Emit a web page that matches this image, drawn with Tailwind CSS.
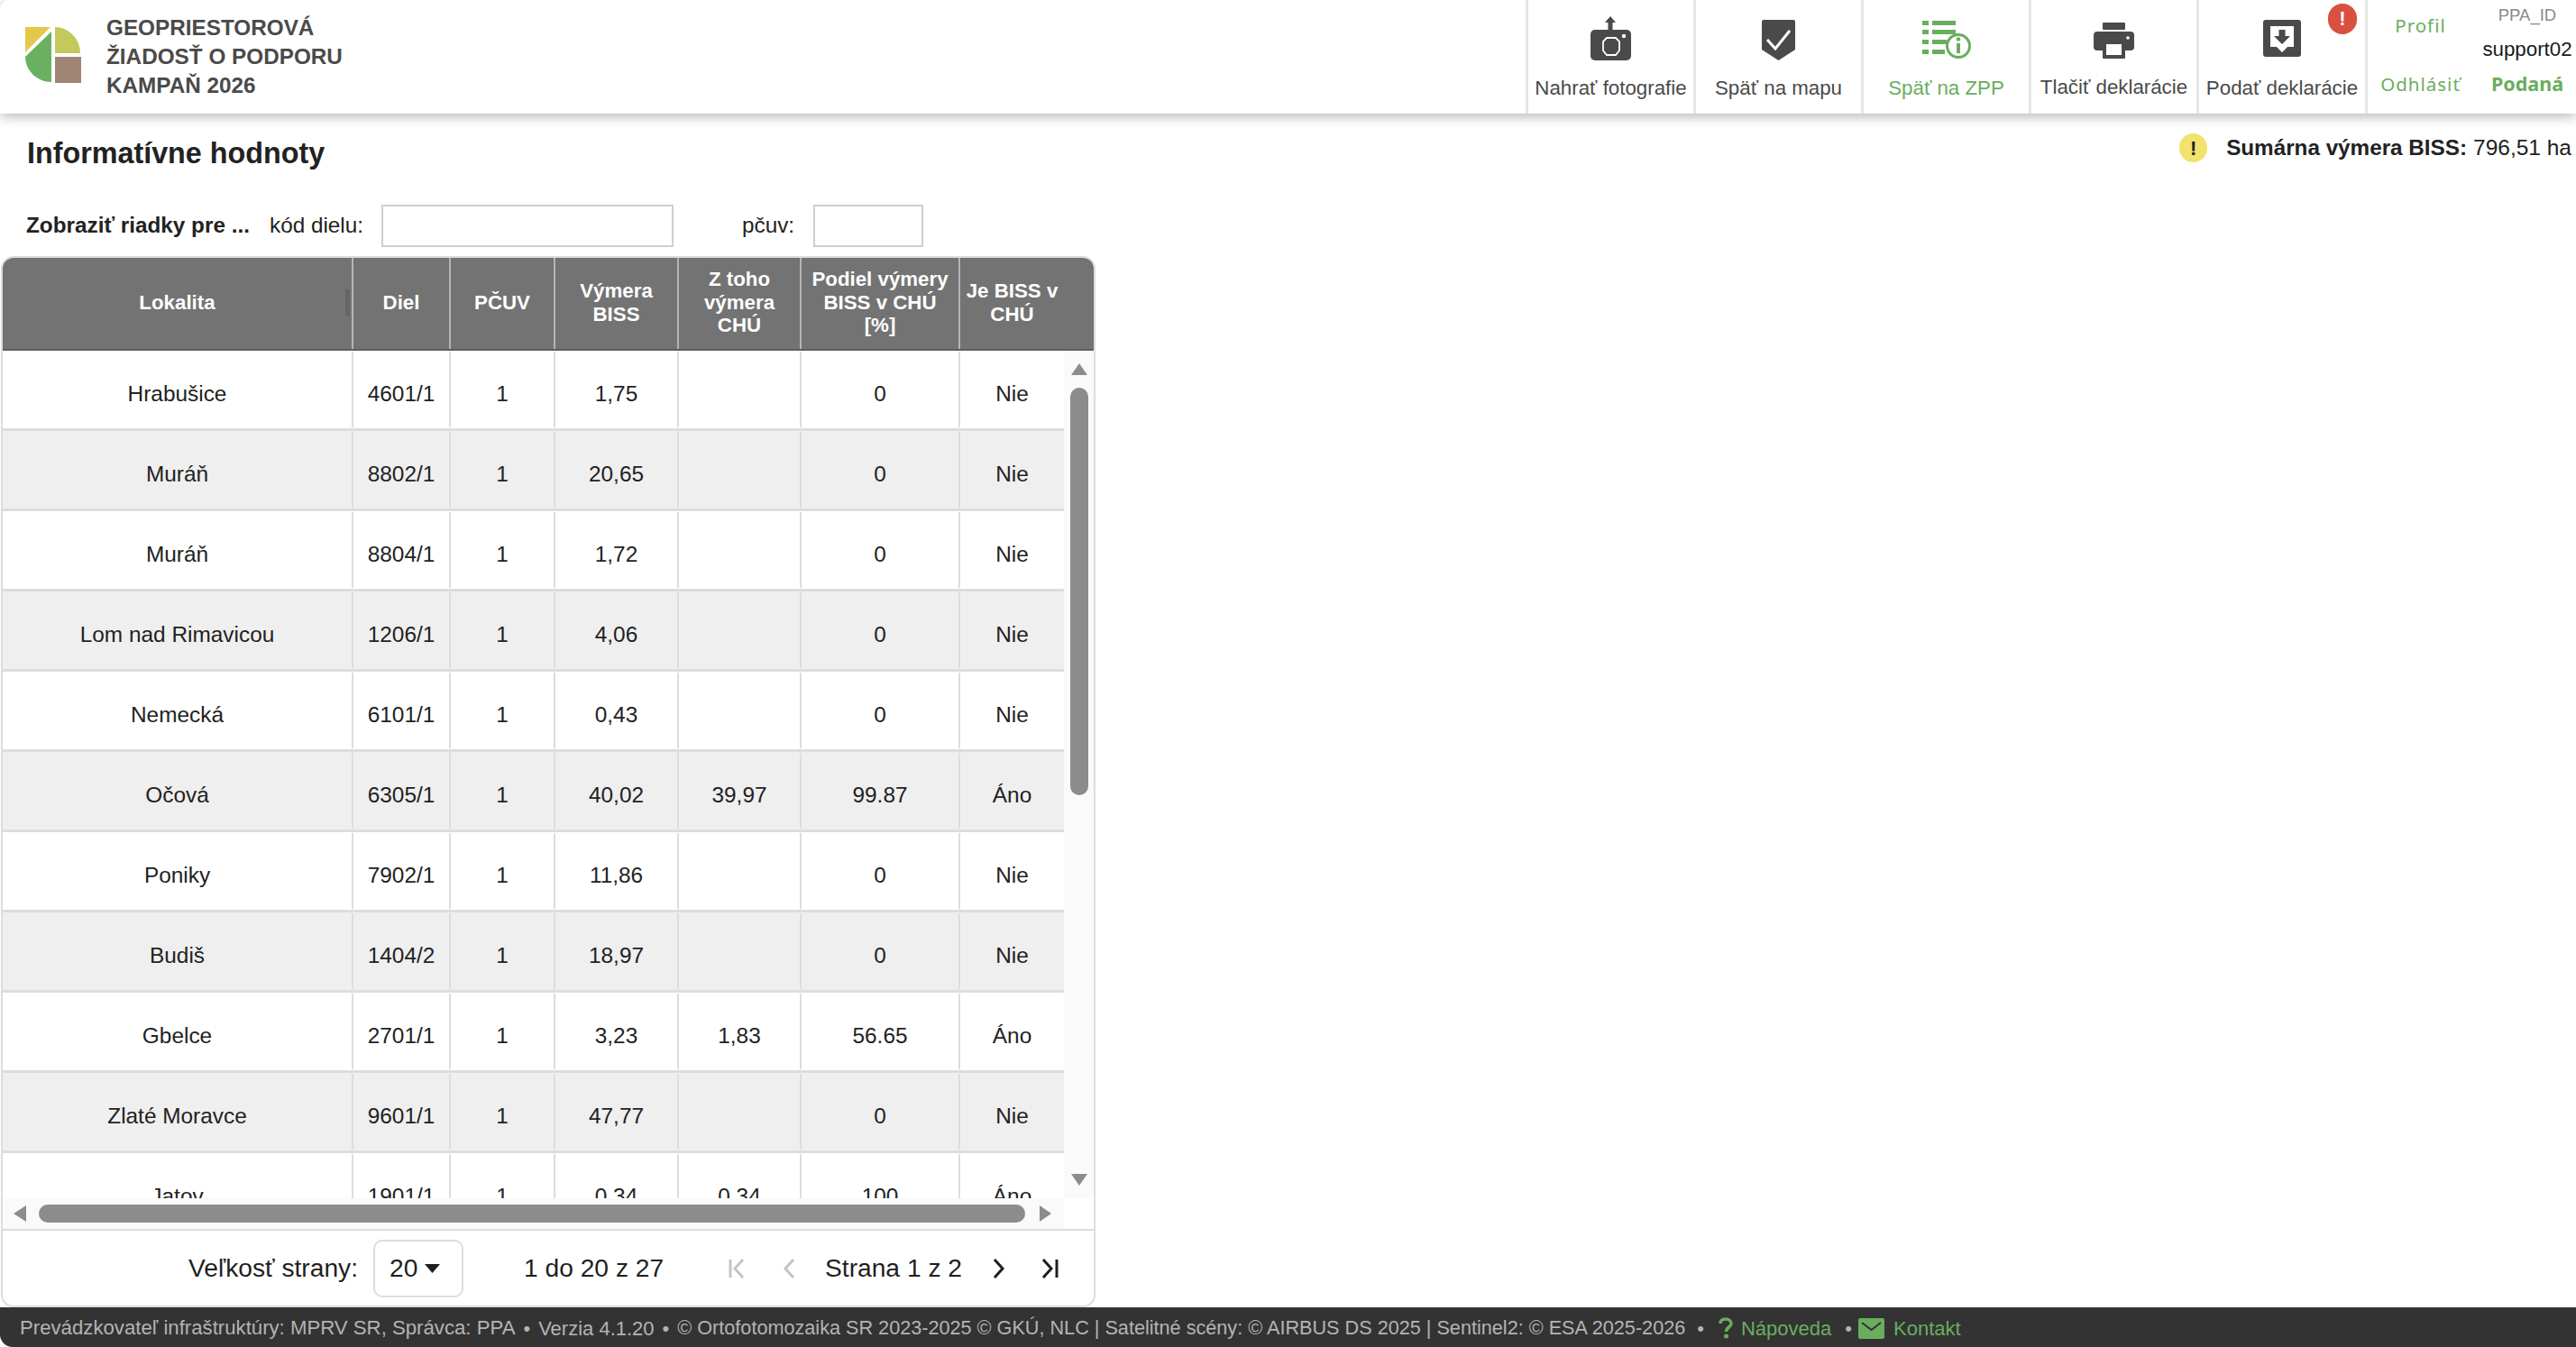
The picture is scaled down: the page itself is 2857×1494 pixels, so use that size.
<!DOCTYPE html>
<html lang="sk">
<head>
  <meta charset="UTF-8">
  <meta name="viewport" content="width=device-width, initial-scale=1.0">
  <title>Informatívne hodnoty</title>
  <script src="https://cdn.jsdelivr.net/npm/@tailwindcss/browser@4"></script>
</head>
<body class="bg-white font-['Liberation_Sans',Arial,sans-serif] text-[#222] overflow-hidden">
<div class="flex h-[1494px] w-[2857px] flex-col overflow-hidden">

  <!-- top bar -->
  <header class="relative z-10 flex h-[126px] shrink-0 justify-between rounded-tl-[10px] bg-white shadow-[0_3px_14px_rgba(0,0,0,0.3)]">
    <div class="flex items-center">
      <svg class="ml-[28px] mt-[-4px]" width="62" height="62" viewBox="0 0 62 62">
        <polygon points="0,0 28,0 0,28" fill="#e3c94a"/>
        <path d="M29 5V61C13 61 0 48 0 33Z" fill="#6ab060"/>
        <path d="M33 0C48 0 61 13 61 29H33Z" fill="#c3c95a"/>
        <rect x="33" y="33" width="29" height="29" fill="#a08474"/>
      </svg>
      <div class="ml-[28px] mt-[-1px] text-[24.3px] font-bold leading-[32px] text-[#4a4a4a]">
        <div>GEOPRIESTOROVÁ</div>
        <div>ŽIADOSŤ O PODPORU</div>
        <div>KAMPAŇ 2026</div>
      </div>
    </div>

    <div class="flex">
      <div class="flex w-[186px] flex-col items-center border-l-[3px] border-[#e6e6e6] text-[22.3px] text-[#4a4a4a]">
        <svg class="mt-[18px]" width="45" height="49" viewBox="0 0 45 49">
          <rect x="0" y="15" width="45" height="34" rx="5" fill="#4a4a4a"/>
          <path d="M22 0L28 7H24.5V15H19.5V7H16Z" fill="#4a4a4a"/>
          <polygon points="18,24 28,24 32,28 32,38 28,43 18,43 14,38 14,28" fill="none" stroke="#fff" stroke-width="1.8"/>
          <circle cx="37" cy="22" r="2.2" fill="#fff"/>
        </svg>
        <span class="mt-[18px] leading-[26px]">Nahrať fotografie</span>
      </div>
      <div class="flex w-[186px] flex-col items-center border-l-[3px] border-[#e6e6e6] text-[22.3px] text-[#4a4a4a]">
        <svg class="mt-[22px]" width="37" height="45" viewBox="0 0 37 45">
          <path d="M2 0H35A2 2 0 0 1 37 2V33L18.5 45L0 33V2A2 2 0 0 1 2 0Z" fill="#4a4a4a"/>
          <path d="M6 22L15 32L31 12" fill="none" stroke="#fff" stroke-width="3"/>
        </svg>
        <span class="mt-[18px] leading-[26px]">Späť na mapu</span>
      </div>
      <div class="flex w-[186px] flex-col items-center border-l-[3px] border-[#e6e6e6] text-[22.3px] text-[#6aad5e]">
        <svg class="mt-[22px]" width="54" height="45" viewBox="0 0 54 45">
          <g fill="#6aad5e">
            <rect x="0" y="1" width="7" height="5"/><rect x="11" y="1" width="26" height="5"/>
            <rect x="0" y="11" width="7" height="5"/><rect x="11" y="11" width="26" height="5"/>
            <rect x="0" y="22" width="7" height="5"/><rect x="11" y="22" width="16" height="5"/>
            <rect x="0" y="33" width="7" height="5"/><rect x="11" y="33" width="14" height="5"/>
          </g>
          <circle cx="40" cy="29" r="12.5" fill="#fff" stroke="#6aad5e" stroke-width="3"/>
          <rect x="38" y="26" width="4" height="11" fill="#6aad5e"/>
          <circle cx="40" cy="21.5" r="2.3" fill="#6aad5e"/>
        </svg>
        <span class="mt-[18px] leading-[26px]">Späť na ZPP</span>
      </div>
      <div class="flex w-[186px] flex-col items-center border-l-[3px] border-[#e6e6e6] text-[22.3px] text-[#4a4a4a]">
        <svg class="mt-[25px]" width="45" height="40" viewBox="0 0 45 40">
          <rect x="10" y="0" width="25" height="8" rx="1" fill="#4a4a4a"/>
          <rect x="0" y="10" width="45" height="21" rx="4" fill="#4a4a4a"/>
          <rect x="10" y="20" width="25" height="20" rx="1" fill="#4a4a4a"/>
          <rect x="14" y="24" width="17" height="12" fill="#fff"/>
          <circle cx="38" cy="17" r="1.8" fill="#fff"/>
        </svg>
        <span class="mt-[19px] leading-[26px]">Tlačiť deklarácie</span>
      </div>
      <div class="relative flex w-[187px] flex-col items-center border-l-[3px] border-[#e6e6e6] text-[22.3px] text-[#4a4a4a]">
        <svg class="mt-[22px]" width="42" height="41" viewBox="0 0 42 41">
          <rect x="0" y="0" width="42" height="41" rx="3" fill="#4a4a4a"/>
          <path d="M8 7H34V30H27L21 36L15 30H8Z" fill="#fff"/>
          <path d="M17.5 11H24.5V18H30L21 27L12 18H17.5Z" fill="#4a4a4a"/>
        </svg>
        <span class="mt-[22px] leading-[26px]">Podať deklarácie</span>
        <span class="absolute left-[143px] top-[4px] flex h-[34px] w-[32px] items-center justify-center rounded-full bg-[#d9503f] text-[22px] font-bold leading-none text-white">!</span>
      </div>
      <div class="flex w-[234px] border-l-[3px] border-[#e6e6e6]">
        <div class="flex w-[117px] shrink-0 flex-col items-center justify-between pb-[18px] pt-[13px] font-['Noto_Sans',sans-serif] text-[20.5px] leading-[30px] tracking-[1px] text-[#6aad5e]">
          <span>Profil</span>
          <span>Odhlásiť</span>
        </div>
        <div class="ml-[3px] flex w-[114px] shrink-0 flex-col items-center pt-[5px]">
          <span class="h-[24px] text-[18.5px] leading-[24px] text-[#8a8a8a]">PPA_ID</span>
          <span class="mt-[11px] h-[30px] text-[22.3px] leading-[30px] text-[#1a1a1a]">support02</span>
          <span class="mt-[8px] h-[30px] font-['Noto_Sans',sans-serif] text-[21.5px] font-bold leading-[30px] text-[#6aad5e]">Podaná</span>
        </div>
      </div>
    </div>
  </header>

  <main class="flex min-h-0 flex-1 flex-col">
    <div class="flex h-[90px] shrink-0 justify-between pl-[30px] pr-[5px]">
      <h1 class="mt-[24px] text-[32.3px] font-bold leading-[40px] text-[#222]">Informatívne hodnoty</h1>
      <div class="mt-[22px] flex h-[32px] items-center text-[24.5px]">
        <span class="mr-[21px] flex h-[32px] w-[31px] items-center justify-center rounded-full bg-[#f2e26e] text-[22px] font-bold text-[#222]">!</span>
        <span class="text-[24.25px] font-bold">Sumárna výmera BISS:</span><span class="ml-[7px]">796,51 ha</span>
      </div>
    </div>

    <div class="flex h-[68px] shrink-0 items-center pl-[29px] text-[24.3px]">
      <span class="w-[270px] font-bold">Zobraziť riadky pre ...</span>
      <span class="w-[124px]">kód dielu:</span>
      <div class="h-[47px] w-[324px] border-[2px] border-[#cfcfcf] bg-white"></div>
      <span class="ml-[76px] w-[79px]">pčuv:</span>
      <div class="h-[47px] w-[122px] border-[2px] border-[#cfcfcf] bg-white"></div>
    </div>

    <!-- table card -->
    <div class="ml-[1px] flex h-[1166px] w-[1214px] shrink-0 flex-col overflow-hidden rounded-[14px] border-[2px] border-[#ddd]">
      <div class="relative flex h-[103px] shrink-0 border-b-[2px] border-[#5f5f5f] bg-[#737373] text-center text-[22.3px] font-bold leading-[25.5px] text-white">
        <div class="flex w-[387px] items-center justify-center pb-[2px]">Lokalita</div>
        <div class="flex w-[108px] items-center justify-center border-l-2 border-[#b5b5b5] pb-[2px]">Diel</div>
        <div class="flex w-[116px] items-center justify-center border-l-2 border-[#b5b5b5] pb-[2px]">PČUV</div>
        <div class="flex w-[137px] items-center justify-center border-l-2 border-[#b5b5b5] pb-[2px]">Výmera<br>BISS</div>
        <div class="flex w-[136px] items-center justify-center border-l-2 border-[#b5b5b5] pb-[2px]">Z toho<br>výmera<br>CHÚ</div>
        <div class="flex w-[176px] items-center justify-center border-l-2 border-[#b5b5b5] pb-[2px]">Podiel výmery<br>BISS v CHÚ<br>[%]</div>
        <div class="flex w-[117px] items-center justify-center border-l-2 border-[#b5b5b5] pb-[2px]">Je BISS v<br>CHÚ</div>
        <span class="absolute left-[380px] top-[35px] h-[30px] w-[5px] bg-[#666]"></span>
      </div>

      <div class="flex h-[940px] shrink-0">
        <div id="rows" class="h-[940px] w-[1177px] overflow-hidden text-[24.4px] text-[#222]"></div>
        <div class="flex w-[33px] flex-col items-center bg-[#fafafa]">
          <svg class="mt-[14px]" width="18" height="13" viewBox="0 0 18 13"><path d="M9 0L18 13H0Z" fill="#8c8c8c"/></svg>
          <div class="mt-[14px] h-[452px] w-[20px] rounded-full bg-[#8c8c8c]"></div>
          <svg class="mb-[14px] mt-auto" width="18" height="13" viewBox="0 0 18 13"><path d="M9 13L18 0H0Z" fill="#8c8c8c"/></svg>
        </div>
      </div>

      <div class="flex h-[34px] shrink-0 bg-white">
        <div class="flex w-[1177px] items-center bg-[#fafafa] pl-[12px]">
          <svg width="14" height="18" viewBox="0 0 14 18"><path d="M0 9L14 0V18Z" fill="#8c8c8c"/></svg>
          <div class="ml-[14px] h-[20px] w-[1094px] rounded-full bg-[#8c8c8c]"></div>
          <svg class="ml-[16px]" width="13" height="18" viewBox="0 0 13 18"><path d="M13 9L0 0V18Z" fill="#8c8c8c"/></svg>
        </div>
      </div>

      <div class="flex h-[85px] shrink-0 items-center border-t-[2px] border-[#ddd] pl-[206px] text-[28.2px] text-[#1f1f1f]">
        <span class="w-[205px]">Veľkosť strany:</span>
        <div class="flex h-[64px] w-[100px] items-center rounded-[10px] border-[2px] border-[#ddd] pl-[16px]">
          20
          <svg class="ml-[8px]" width="17" height="10" viewBox="0 0 17 10"><path d="M0 0H17L8.5 10Z" fill="#1f1f1f"/></svg>
        </div>
        <span class="ml-[67px] w-[227px]">1 do 20 z 27</span>
        <svg width="18" height="24" viewBox="0 0 18 24" fill="none" stroke="#c4c4c4" stroke-width="3"><path d="M2 2V22"/><path d="M16 2L7 12L16 22"/></svg>
        <svg class="ml-[42px]" width="14" height="24" viewBox="0 0 14 24" fill="none" stroke="#c4c4c4" stroke-width="3"><path d="M12 2L3 12L12 22"/></svg>
        <span class="ml-[33px]">Strana 1 z 2</span>
        <svg class="ml-[34px]" width="14" height="24" viewBox="0 0 14 24" fill="none" stroke="#1f1f1f" stroke-width="3"><path d="M2 2L11 12L2 22"/></svg>
        <svg class="ml-[40px]" width="19" height="24" viewBox="0 0 19 24" fill="none" stroke="#1f1f1f" stroke-width="3"><path d="M2 2L11 12L2 22"/><path d="M17 2V22"/></svg>
      </div>
    </div>
  </main>

  <footer class="flex h-[44px] shrink-0 items-center rounded-bl-[14px] bg-[#333] pl-[22px] pt-[2px] text-[22px] text-[#b4b4b4]">
    <span class="text-[22.2px]">Prevádzkovateľ infraštruktúry: MPRV SR, Správca: PPA</span>
    <span class="ml-[9px]">•</span>
    <span class="ml-[9px]">Verzia 4.1.20</span>
    <span class="ml-[9px]">•</span>
    <span class="ml-[9px] text-[21.65px]">© Ortofotomozaika SR 2023-2025 © GKÚ, NLC | Satelitné scény: © AIRBUS DS 2025 | Sentinel2: © ESA 2025-2026</span>
    <span class="ml-[13px]">•</span>
    <svg class="ml-[16px]" width="16" height="24" viewBox="0 0 16 24"><path d="M2 7C2 3 5 2 8 2C11 2 14 4 14 7C14 11 8.500 11 8.500 16" fill="none" stroke="#6aad5e" stroke-width="3.5"/><circle cx="8.500" cy="21" r="2.500" fill="#6aad5e"/></svg>
    <span class="ml-[9px] text-[#6aad5e]">Nápoveda</span>
    <span class="ml-[15px]">•</span>
    <svg class="ml-[7px]" width="29" height="23" viewBox="0 0 29 23"><rect width="29" height="23" rx="2" fill="#6aad5e"/><path d="M4 5L14.500 13L25 5" fill="none" stroke="#333" stroke-width="2"/></svg>
    <span class="ml-[10px] text-[#6aad5e]">Kontakt</span>
  </footer>
</div>

<script>
  const data = [
    ['Hrabušice', '4601/1', '1', '1,75', '', '0', 'Nie'],
    ['Muráň', '8802/1', '1', '20,65', '', '0', 'Nie'],
    ['Muráň', '8804/1', '1', '1,72', '', '0', 'Nie'],
    ['Lom nad Rimavicou', '1206/1', '1', '4,06', '', '0', 'Nie'],
    ['Nemecká', '6101/1', '1', '0,43', '', '0', 'Nie'],
    ['Očová', '6305/1', '1', '40,02', '39,97', '99.87', 'Áno'],
    ['Poniky', '7902/1', '1', '11,86', '', '0', 'Nie'],
    ['Budiš', '1404/2', '1', '18,97', '', '0', 'Nie'],
    ['Gbelce', '2701/1', '1', '3,23', '1,83', '56.65', 'Áno'],
    ['Zlaté Moravce', '9601/1', '1', '47,77', '', '0', 'Nie'],
    ['Jatov', '1901/1', '1', '0,34', '0,34', '100', 'Áno']
  ];

  const rows = document.getElementById('rows');
  data.forEach((r, i) => {
    const bg = i % 2 ? 'bg-[#efefef]' : 'bg-white';
    const cell = 'my-[1px] flex items-center justify-center border-l-2 border-[#ddd] pt-[10px]';
    rows.innerHTML += `
      <div class="flex h-[89px] border-b-[3px] border-[#ddd] ${bg}">
        <div class="flex w-[387px] items-center justify-center pt-[10px]">${r[0]}</div>
        <div class="w-[108px] ${cell}">${r[1]}</div>
        <div class="w-[116px] ${cell}">${r[2]}</div>
        <div class="w-[137px] ${cell}">${r[3]}</div>
        <div class="w-[136px] ${cell}">${r[4]}</div>
        <div class="w-[176px] ${cell}">${r[5]}</div>
        <div class="w-[117px] ${cell}">${r[6]}</div>
      </div>`;
  });
</script>
</body>
</html>
